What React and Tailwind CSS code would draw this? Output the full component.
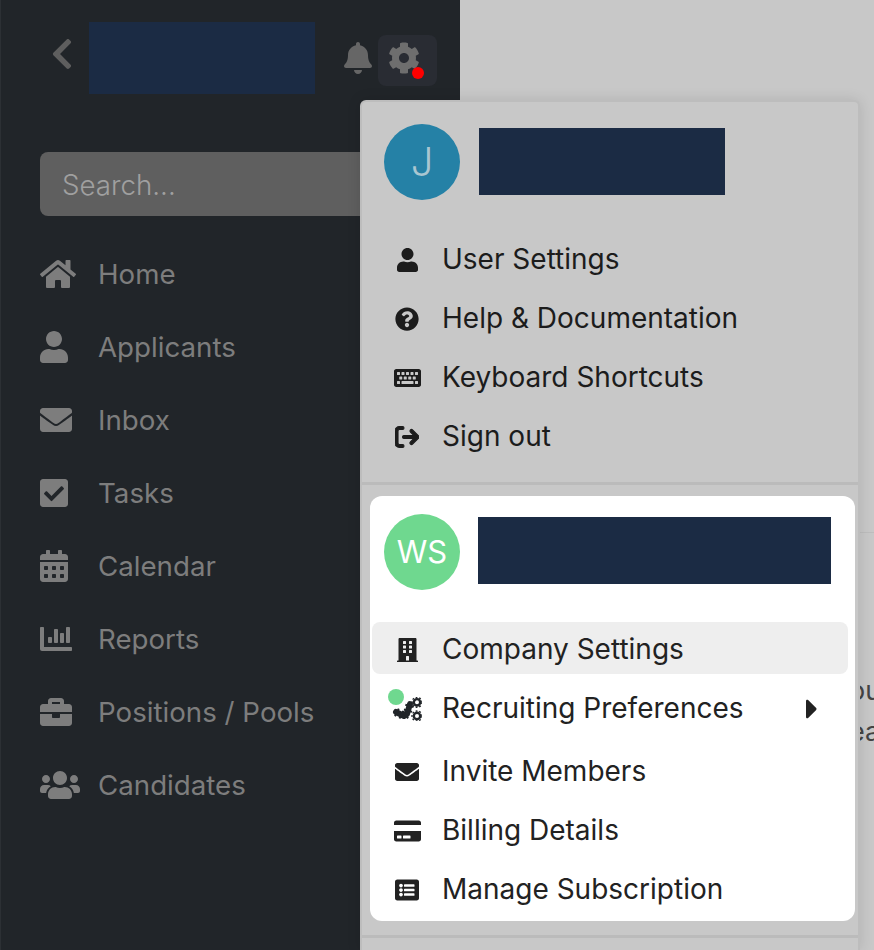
import React from "react";
import {
  FaHome, FaUser, FaEnvelope, FaCheckSquare, FaCalendarAlt, FaChartBar, FaBriefcase, FaUsers,
  FaBell, FaCog, FaChevronLeft, FaQuestionCircle, FaKeyboard, FaBuilding,
  FaCaretRight, FaCreditCard, FaListAlt,
} from "react-icons/fa";
import { FaArrowRightFromBracket } from "react-icons/fa6";

const nav = [
  { label: "Home", Icon: FaHome, w: "w-[36px]" },
  { label: "Applicants", Icon: FaUser, w: "w-[28px]" },
  { label: "Inbox", Icon: FaEnvelope, w: "w-8" },
  { label: "Tasks", Icon: FaCheckSquare, w: "w-[28px]" },
  { label: "Calendar", Icon: FaCalendarAlt, w: "w-[28px]" },
  { label: "Reports", Icon: FaChartBar, w: "w-8" },
  { label: "Positions / Pools", Icon: FaBriefcase, w: "w-8" },
  { label: "Candidates", Icon: FaUsers, w: "w-10" },
];

const userItems = [
  { label: "User Settings", Icon: FaUser, w: "w-[21px]" },
  { label: "Help & Documentation", Icon: FaQuestionCircle, w: "w-6" },
  { label: "Keyboard Shortcuts", Icon: FaKeyboard, w: "w-[27px]" },
];

// small cogs joined by a branch, no package has this one
function PrefsIcon() {
  return (
    <svg width="30" height="24" viewBox="0 0 30 24" fill="none" aria-hidden>
      <path d="M4 15 L12 19 L15 17 L18 7" stroke="#212529" strokeWidth="6" strokeLinecap="round" strokeLinejoin="round" />
      <path d="M4 15 L12 19 L15 17 L18 7" stroke="#212529" strokeWidth="8.5" strokeDasharray="2 3" />
      <circle cx="25" cy="5.3" r="3.2" stroke="#212529" strokeWidth="2.4" />
      <circle cx="25" cy="5.3" r="5" stroke="#212529" strokeWidth="1.4" strokeDasharray="1.8 1.8" />
      <circle cx="25" cy="19" r="3.2" stroke="#212529" strokeWidth="2.4" />
      <circle cx="25" cy="19" r="5" stroke="#212529" strokeWidth="1.4" strokeDasharray="1.8 1.8" />
    </svg>
  );
}

function MenuRow({ icon, label, className = "" }) {
  return (
    <div className={`flex h-[52px] items-center rounded-lg pt-[4px] ${className}`}>
      <span className="flex w-[70px] shrink-0 items-center justify-center">{icon}</span>
      <span className="flex-1 pb-[2px]">{label}</span>
    </div>
  );
}

export default function App() {
  return (
    <div className="relative flex h-[950px] w-[874px] overflow-hidden bg-[#c8c8c8] font-['Inter',sans-serif]">
      {/* Sidebar */}
      <aside className="w-[460px] shrink-0 border-l border-[#2c3034] bg-[#212529] text-[27.7px] text-[#7d7d7d]">
        <div className="flex h-[152px] items-start">
          <FaChevronLeft className="ml-[50px] mt-[36px] h-9 w-[22px] shrink-0 text-[#5e5e5e]" />
          <div className="ml-[16px] mt-[22px] h-[72px] w-[226px] bg-[#1b2b44]" />
          <FaBell className="ml-[29px] mt-[42px] h-8 w-[28px] shrink-0 text-[#666666]" />
          <div className="relative ml-[6px] mt-[35px] flex h-[51px] w-[59px] items-start rounded-lg bg-[#292c33] pl-[10px] pt-[7px]">
            <FaCog size={32} className="text-[#6e6e6e]" />
            <span className="absolute left-[34px] top-[32px] h-[12px] w-[12px] rounded-full bg-[#fe0000]" />
          </div>
        </div>
        <div className="ml-[39px] flex h-[64px] items-center rounded-lg bg-[#5f5f5f] pl-[22px] pt-[3px] font-light text-[#a0a0a0]">Search...</div>
        <nav className="ml-[39px] mt-[22px] flex flex-col">
          {nav.map(({ label, Icon, w }) => (
            <div key={label} className="flex h-[73px] items-center">
              <span className="flex w-[58px] shrink-0 items-center pb-[2px]"><Icon className={`h-8 shrink-0 ${w}`} /></span>
              <span>{label}</span>
            </div>
          ))}
        </nav>
      </aside>

      {/* Page behind the overlay */}
      <main className="relative flex-1 text-[27px] text-[#444444]">
        <div className="mt-[532px] h-px bg-[#bdbdbd]" />
        <p className="mt-[137px] whitespace-nowrap pl-[389px] leading-[41px]">ou<br />ea</p>
      </main>

      {/* Settings dropdown */}
      <div className="absolute left-[360px] top-[100px] h-[850px] w-[500px] rounded-t-md border-2 border-b-0 border-[#bdbdbd] bg-[#c8c8c8] text-[28px] text-[#1c1c1c] shadow-[0_0_14px_rgba(0,0,0,0.12)]">
        <div className="flex h-[116px] items-center pl-[22px] pt-[4px]">
          <div className="flex h-[76px] w-[76px] items-center justify-center rounded-full bg-[#2581a6] text-[40px] font-light text-[#a9c6d1]">J</div>
          <div className="mb-[2px] ml-[19px] h-[67px] w-[246px] bg-[#1b2b44]" />
        </div>
        <div className="flex flex-col gap-[7px] px-[10px] pt-[14px]">
          {userItems.map(({ label, Icon, w }) => (
            <MenuRow key={label} icon={<Icon className={`h-6 ${w}`} />} label={label} />
          ))}
          <MenuRow icon={<FaArrowRightFromBracket className="h-6 w-6" strokeWidth={24} />} label="Sign out" />
        </div>
        <div className="mt-[21px] border-t-[3px] border-[#bbbbbb]" />
        <div className="ml-[8px] mr-[3px] mt-[11px] rounded-xl bg-white pb-[7px] text-[#222222]">
          <div className="flex h-[126px] items-start pl-[14px] pt-[18px]">
            <div className="flex h-[76px] w-[76px] items-center justify-center rounded-full bg-[#6fd88f] text-[31px] text-white">WS</div>
            <div className="ml-[18px] mt-[3px] h-[67px] w-[353px] bg-[#1b2b44]" />
          </div>
          <div className="pl-[2px] pr-[7px]">
            <MenuRow icon={<FaBuilding className="h-6 w-[21px]" />} label="Company Settings" className="bg-[#eeeeee]" />
            <div className="relative mt-[7px]">
              <MenuRow icon={<PrefsIcon />} label="Recruiting Preferences" />
              <span className="absolute left-[16px] top-[8px] h-[16px] w-[16px] rounded-full bg-[#6fd88f]" />
              <FaCaretRight size={32} className="absolute right-[20px] top-[12px]" />
            </div>
            <div className="mt-[11px]"><MenuRow icon={<FaEnvelope className="h-6 w-6" />} label="Invite Members" /></div>
            <div className="mt-[7px]"><MenuRow icon={<FaCreditCard className="h-6 w-[27px]" />} label="Billing Details" /></div>
            <div className="mt-[7px]"><MenuRow icon={<FaListAlt className="h-6 w-6" />} label="Manage Subscription" /></div>
          </div>
        </div>
        <div className="mt-[14px] border-t-[3px] border-[#bbbbbb]" />
      </div>
    </div>
  );
}
